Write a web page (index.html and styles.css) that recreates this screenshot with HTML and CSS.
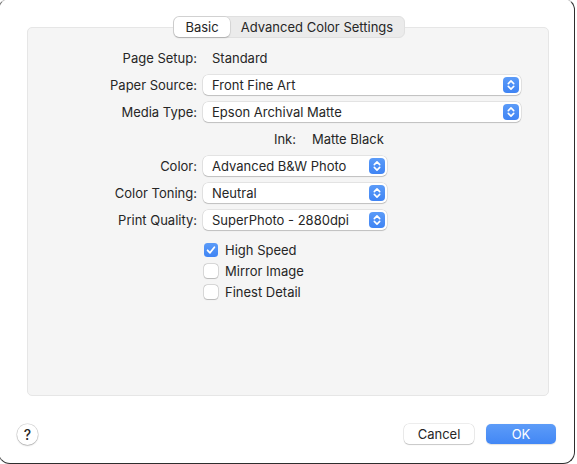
FILE: index.html
```html
<!DOCTYPE html>
<html>
<head>
<meta charset="utf-8">
<link rel="stylesheet" href="styles.css">
</head>
<body>
<div class="window">
  <div class="tabs">
    <div class="seg">
      <div class="seg-item active">Basic</div>
      <div class="seg-item rest">Advanced Color Settings</div>
    </div>
  </div>
  <div class="panel">
    <div class="rows">
      <div class="row">
        <div class="label">Page Setup:</div>
        <div class="value">Standard</div>
      </div>
      <div class="row">
        <div class="label">Paper Source:</div>
        <div class="popup long"><span>Front Fine Art</span><span class="stepper"><svg width="16" height="16" viewBox="0 0 16 16"><path d="M5.3 6.6 L8 3.9 L10.7 6.6 M5.3 9.4 L8 12.1 L10.7 9.4" fill="none" stroke="#fff" stroke-width="1.6" stroke-linecap="round" stroke-linejoin="round"/></svg></span></div>
      </div>
      <div class="row">
        <div class="label">Media Type:</div>
        <div class="popup long"><span>Epson Archival Matte</span><span class="stepper"><svg width="16" height="16" viewBox="0 0 16 16"><path d="M5.3 6.6 L8 3.9 L10.7 6.6 M5.3 9.4 L8 12.1 L10.7 9.4" fill="none" stroke="#fff" stroke-width="1.6" stroke-linecap="round" stroke-linejoin="round"/></svg></span></div>
      </div>
      <div class="row">
        <div class="label"></div>
        <div class="ink"><span class="ink-label">Ink:</span><span class="ink-value">Matte Black</span></div>
      </div>
      <div class="row">
        <div class="label">Color:</div>
        <div class="popup short"><span>Advanced B&amp;W Photo</span><span class="stepper"><svg width="16" height="16" viewBox="0 0 16 16"><path d="M5.3 6.6 L8 3.9 L10.7 6.6 M5.3 9.4 L8 12.1 L10.7 9.4" fill="none" stroke="#fff" stroke-width="1.6" stroke-linecap="round" stroke-linejoin="round"/></svg></span></div>
      </div>
      <div class="row">
        <div class="label">Color Toning:</div>
        <div class="popup short"><span>Neutral</span><span class="stepper"><svg width="16" height="16" viewBox="0 0 16 16"><path d="M5.3 6.6 L8 3.9 L10.7 6.6 M5.3 9.4 L8 12.1 L10.7 9.4" fill="none" stroke="#fff" stroke-width="1.6" stroke-linecap="round" stroke-linejoin="round"/></svg></span></div>
      </div>
      <div class="row">
        <div class="label">Print Quality:</div>
        <div class="popup short"><span>SuperPhoto - 2880dpi</span><span class="stepper"><svg width="16" height="16" viewBox="0 0 16 16"><path d="M5.3 6.6 L8 3.9 L10.7 6.6 M5.3 9.4 L8 12.1 L10.7 9.4" fill="none" stroke="#fff" stroke-width="1.6" stroke-linecap="round" stroke-linejoin="round"/></svg></span></div>
      </div>
    </div>
    <div class="checks">
      <div class="check-row"><span class="box checked"><svg width="14" height="14" viewBox="0 0 14 14"><path d="M3.6 7.3 L6 9.8 L10.4 4.2" fill="none" stroke="#fff" stroke-width="1.8" stroke-linecap="round" stroke-linejoin="round"/></svg></span><span>High Speed</span></div>
      <div class="check-row"><span class="box"></span><span>Mirror Image</span></div>
      <div class="check-row"><span class="box"></span><span>Finest Detail</span></div>
    </div>
  </div>
  <div class="footer">
    <div class="help">?</div>
    <div class="buttons">
      <div class="btn">Cancel</div>
      <div class="btn primary">OK</div>
    </div>
  </div>
</div>
</body>
</html>
```
FILE: styles.css
```css
html, body {
  margin: 0;
  padding: 0;
  background: #ffffff;
  overflow: hidden;
}
body {
  font-family: Inter, "Noto Sans", sans-serif;
  font-size: 13px;
  color: #262626;
}
.window {
  box-sizing: border-box;
  width: 577px;
  height: 466px;
  margin: -2px 0 0 -2px;
  border: 1px solid #2e2e2e;
  border-top-color: #c8c8c8;
  border-left-color: #6a6a6a;
  border-radius: 12px;
  background: #ffffff;
  padding: 17px 18px 0 18px;
  display: flex;
  flex-direction: column;
}
.tabs {
  display: flex;
  justify-content: flex-start;
  padding-left: 156px;
  position: relative;
  z-index: 2;
  height: 22px;
}
.seg {
  display: flex;
  align-items: center;
  height: 22px;
  width: 232px;
  box-sizing: border-box;
  background: #ebebeb;
  border: 1px solid #e0e0e0;
  border-radius: 6px;
  padding: 0;
}
.seg-item {
  height: 20px;
  line-height: 20px;
  white-space: nowrap;
  color: #262626;
}
.seg-item.rest {
  flex: 1;
  text-align: center;
}
.seg-item.active {
  box-sizing: border-box;
  width: 56px;
  flex: none;
  text-align: center;
  padding: 0;
  background: #ffffff;
  border-radius: 5px;
  box-shadow: 0 0 0 0.5px rgba(0,0,0,0.12), 0 1px 1.5px rgba(0,0,0,0.18);
}
.panel {
  box-sizing: border-box;
  margin: -11px 7px 0 10px;
  height: 369px;
  background: #f5f5f5;
  border: 1px solid #e6e6e6;
  border-radius: 5px;
  padding-top: 20px;
  position: relative;
  z-index: 1;
}
.rows {
  display: flex;
  flex-direction: column;
  gap: 7px;
}
.row {
  display: flex;
  align-items: center;
  height: 20px;
}
.label {
  width: 169px;
  text-align: right;
  flex: none;
  margin-right: 6px;
}
.value {
  padding-left: 9px;
}
.popup {
  box-sizing: border-box;
  height: 20px;
  display: flex;
  align-items: center;
  justify-content: space-between;
  background: #ffffff;
  border-radius: 5px;
  box-shadow: 0 0 0 0.5px rgba(0,0,0,0.14), 0 1px 1px rgba(0,0,0,0.16);
  padding: 0 2px 0 9px;
}
.popup.long { width: 318px; }
.popup.short { width: 184px; }
.stepper {
  width: 16px;
  height: 16px;
  border-radius: 4px;
  background: linear-gradient(#5b9bf8, #3f84f4);
  display: flex;
}
.ink {
  display: flex;
  align-items: center;
}
.ink-label {
  width: 93px;
  text-align: right;
}
.ink-value {
  margin-left: 16px;
}
.checks {
  display: flex;
  flex-direction: column;
  gap: 1px;
  margin-top: 10px;
  padding-left: 176px;
}
.check-row {
  display: flex;
  align-items: center;
  height: 20px;
  gap: 7px;
}
.box {
  box-sizing: border-box;
  width: 14px;
  height: 14px;
  border-radius: 3.5px;
  background: #ffffff;
  box-shadow: 0 0 0 0.5px rgba(0,0,0,0.22), 0 0.5px 1px rgba(0,0,0,0.15);
  display: flex;
}
.box.checked {
  background: linear-gradient(#5b9bf8, #3f84f4);
  box-shadow: none;
}
.footer {
  display: flex;
  align-items: center;
  justify-content: space-between;
  margin-top: 28px;
  height: 20px;
}
.help {
  width: 21px;
  height: 21px;
  border-radius: 50%;
  background: #ffffff;
  box-shadow: 0 0 0 0.5px rgba(0,0,0,0.18), 0 1px 1.5px rgba(0,0,0,0.2);
  text-align: center;
  line-height: 21px;
  font-size: 14px;
  font-weight: 500;
  color: #262626;
}
.buttons {
  display: flex;
  gap: 12px;
}
.btn {
  width: 70px;
  height: 20px;
  line-height: 20px;
  text-align: center;
  border-radius: 5px;
  background: #ffffff;
  box-shadow: 0 0 0 0.5px rgba(0,0,0,0.14), 0 1px 1px rgba(0,0,0,0.16);
  color: #262626;
}
.btn.primary {
  background: linear-gradient(#5d9cf8, #4287f5);
  color: #ffffff;
  box-shadow: 0 0.5px 1px rgba(0,0,0,0.12);
}
```
